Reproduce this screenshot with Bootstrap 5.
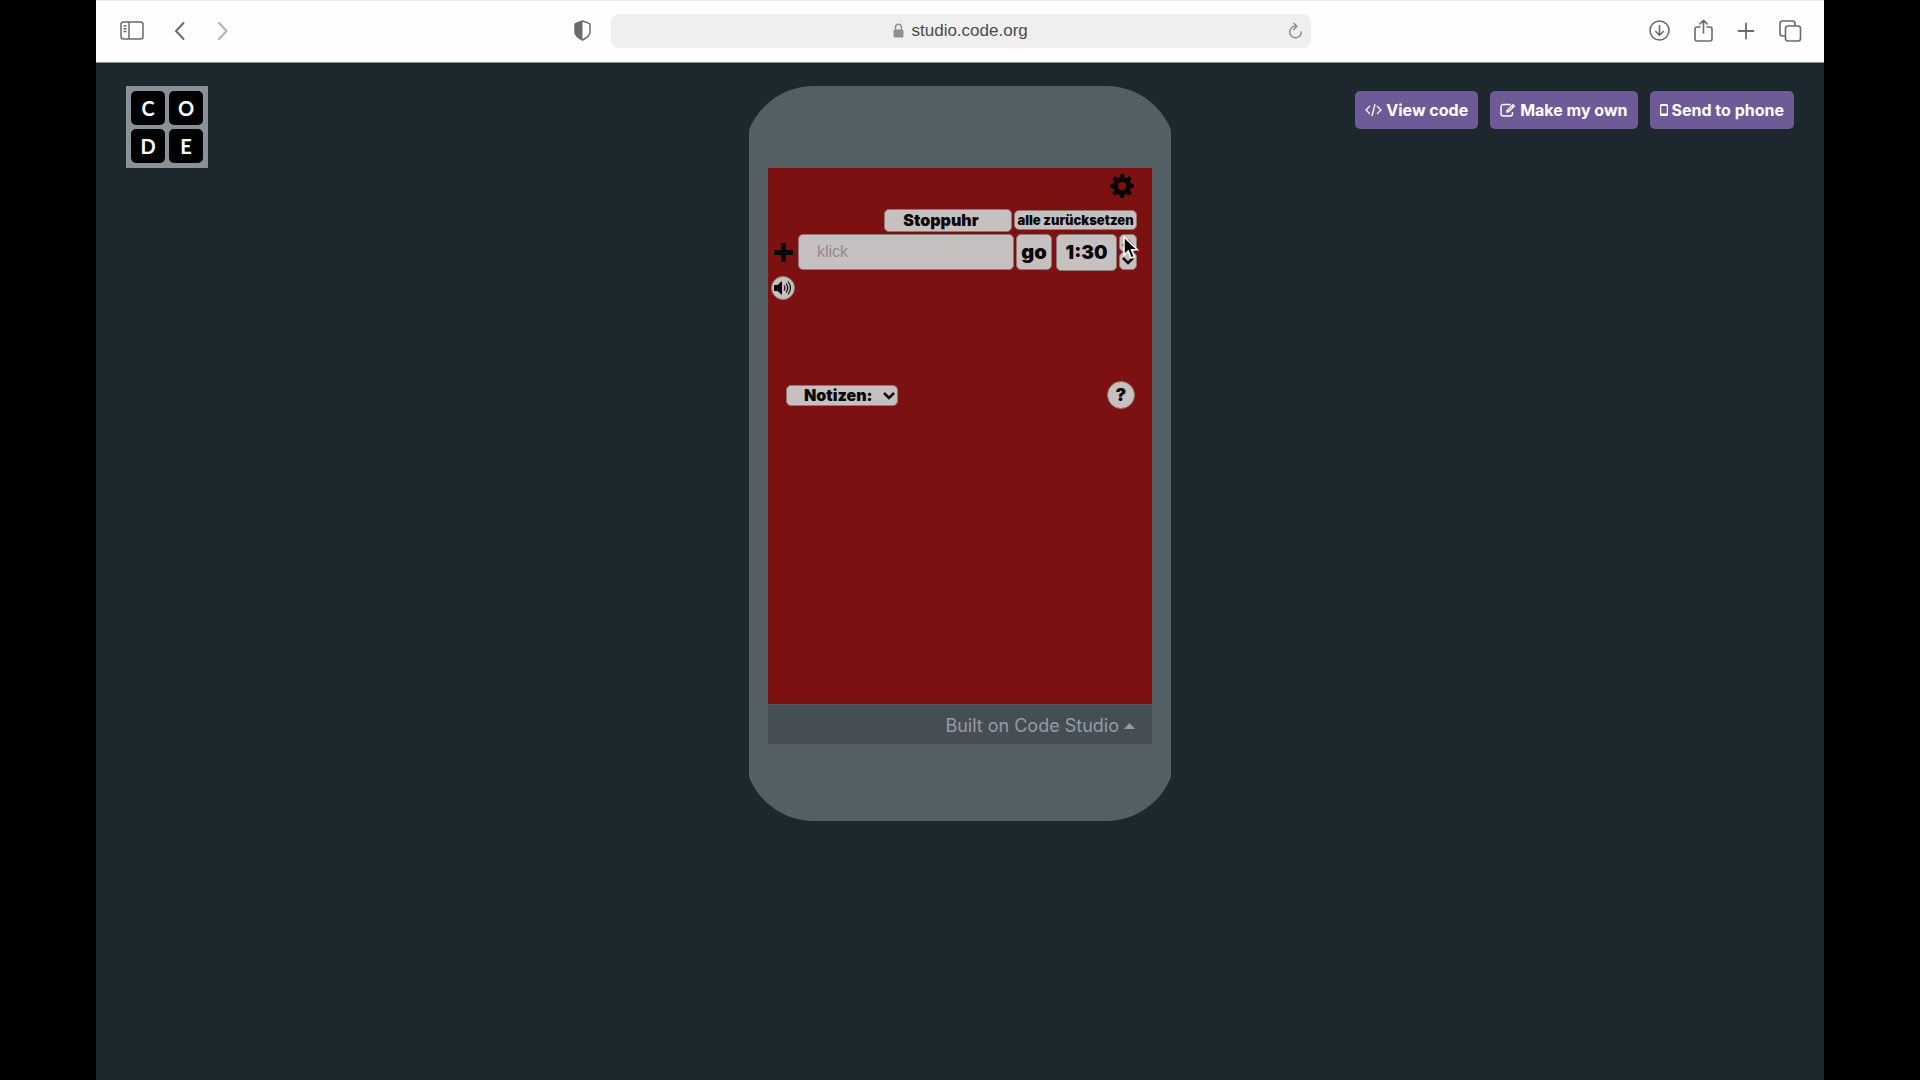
<!DOCTYPE html>
<html lang="de">
<head>
<meta charset="utf-8">
<meta name="viewport" content="width=device-width, initial-scale=1">
<title>studio.code.org</title>
<link href="https://cdn.jsdelivr.net/npm/bootstrap@5.3.0/dist/css/bootstrap.min.css" rel="stylesheet">
<style>
  body { background: #000; font-family: "Liberation Sans", Arial, sans-serif; }
  svg { display: block; flex: none; }
  button { color: inherit; }
  .browser { width: 90%; background: #1d282e; }
  .toolbar { height: 63px; background: #fefefe; border-top: 1px solid #ececec; border-bottom: 1px solid #8c9290; color: #6b6b6b; padding: 0 22px 2px 24px; }
  .tool { padding: 0; border: 0; background: none; }
  .side { flex: 1 1 0; }
  .address { flex: 0 1 700px; height: 34px; border-radius: 8px; background: #efefef; color: #8e8e8e; }
  .address input { width: 118px; padding: 0; border: 0; background: none; color: #4b4b4b; font-size: 17px; line-height: 24px; }
  .stage { padding: 23px 30px; }
  .logo { width: 82px; height: 82px; padding: 5px; gap: 4px; background: #889195; display: grid; grid-template-columns: 1fr 1fr; text-decoration: none; }
  .logo span { background: #000; color: #fff; border-radius: 5px; display: grid; place-items: center; font: 700 20px/24px Lato, sans-serif; }
  .actions { gap: 12px; padding-top: 5px; }
  .action { background: #6d5a97; color: #fff; height: 38px; padding: 0 10px; border: 0; border-radius: 5px; font: 700 16px/24px Inter, sans-serif; white-space: nowrap; }
  .phone { width: 422px; padding: 82px 19px 77px; overflow: hidden; position: relative; z-index: 0; flex: none; }
  .phone::before { content: ""; position: absolute; inset: 0 -5px; border-radius: 70px; background: #535f65; z-index: -1; }
  .screen { min-height: 536px; background: #7d1010; padding-top: 6px; color: #090505; }
  .gear-row { padding-right: 17px; }
  .key { background: #c6c0c0; color: #0b0808; border: 1px solid #8e7777; border-radius: 5px; padding: 0; font-family: Inter, sans-serif; font-weight: 900; text-align: center; }
  .bar-row { height: 22px; margin-top: 11px; padding-right: 15px; gap: 2px; }
  .timer-row { height: 36px; margin-top: 3px; padding: 0 15px 0 6px; }
  .stopwatch { width: 128px; height: 23px; padding-right: 14px; font-size: 16px; line-height: 20px; }
  .reset { width: 123px; height: 20px; font-size: 13px; line-height: 18px; white-space: nowrap; }
  .task { width: 216px; height: 36px; padding: 0 18px; font: 400 16px/24px "Liberation Sans", sans-serif; text-align: left; }
  .task::placeholder { color: #928d8d; opacity: 1; }
  .go { width: 36px; height: 36px; font-size: 20px; line-height: 24px; margin-left: 2px; }
  .time { width: 61px; height: 37px; font-size: 19px; line-height: 24px; margin-left: 4px; }
  .spin { width: 18px; height: 36px; margin-left: 2px; }
  .spin button { flex: 1; display: grid; place-items: center; }
  .sound, .help { border-radius: 50%; display: grid; place-items: center; }
  .sound { width: 24px; height: 24px; margin: 6px 0 0 3px; }
  .notes-row { margin-top: 81px; padding: 0 17px 0 18px; }
  .notes select { appearance: none; display: block; width: 112px; height: 21px; padding-left: 17px; font-size: 16px; line-height: 18px; text-align: left; }
  .notes svg { position: absolute; right: 3px; top: 7px; pointer-events: none; }
  .help { width: 28px; height: 28px; font-size: 18px; line-height: 24px; }
  .studio-bar { height: 40px; background: #464e55; border-top: 1px solid #55565b; padding: 3px 17px 0 0; }
  .studio-bar a { color: #959ca1; text-decoration: none; font: 400 18px/24px Inter, sans-serif; gap: 5px; }
  .pointer { position: absolute; left: 374px; top: 150px; pointer-events: none; }
</style>
<script src="https://cdn.jsdelivr.net/npm/bootstrap@5.3.0/dist/js/bootstrap.bundle.min.js"></script>
</head>
<body>
<div class="browser mx-auto min-vh-100">
  <header class="toolbar d-flex align-items-center">
    <div class="side d-flex align-items-center">
      <button class="tool" aria-label="Sidebar"><svg width="25" height="20" viewBox="0 0 25 20" fill="none" stroke="currentColor" stroke-width="1.5"><rect x="1" y="1" width="22" height="17" rx="2.5"/><path d="M9 1v17M3.5 5h3M3.5 7.800h3M3.500 10.500h3" /></svg></button>
      <button class="tool ms-4 ps-1" aria-label="Back"><svg width="14" height="20" viewBox="0 0 14 20" fill="none" stroke="currentColor" stroke-width="2" stroke-linecap="round" stroke-linejoin="round"><path d="M10.500 2 3 10l7.500 8"/></svg></button>
      <button class="tool ms-4 ps-1 opacity-50" aria-label="Forward"><svg width="14" height="20" viewBox="0 0 14 20" fill="none" stroke="currentColor" stroke-width="2" stroke-linecap="round" stroke-linejoin="round"><path d="m4 2 7.500 8L4 18"/></svg></button>
      <button class="tool ms-auto me-3 pe-1" aria-label="Privacy"><svg width="17" height="21" viewBox="0 0 17 21"><path d="M8.500 1 15 3.400Q16 4 16 5v7c0 4-4.500 6.500-7.500 8C5.500 18.500 1 16 1 12V5q0-1 1-1.600z" fill="none" stroke="currentColor" stroke-width="1.500"/><path d="M8.500 1 2 3.400Q1 4 1 5v7c0 4 4.500 6.500 7.500 8z" fill="currentColor"/></svg></button>
    </div>
    <div class="address d-flex align-items-center justify-content-center position-relative">
      <svg class="me-2" width="11" height="15" viewBox="0 0 11 15"><rect x="0.500" y="6.500" width="10" height="8" rx="1.500" fill="currentColor"/><path d="M2.500 7V4.200a3 3 0 0 1 6 0V7" fill="none" stroke="currentColor" stroke-width="1.400"/></svg>
      <input type="text" value="studio.code.org" aria-label="Adresse">
      <button class="tool position-absolute end-0 me-2" aria-label="Reload"><svg width="15" height="18" viewBox="0 0 15 18" fill="none" stroke="currentColor" stroke-width="1.500" stroke-linecap="round" stroke-linejoin="round"><path d="M8.500 4.200A5.800 5.800 0 1 0 13.300 10M5.800 1.300l3.200 3-3.200 3.100"/></svg></button>
    </div>
    <div class="side d-flex align-items-center justify-content-end gap-4">
      <button class="tool" aria-label="Downloads"><svg width="21" height="21" viewBox="0 0 21 21" fill="none" stroke="currentColor" stroke-width="1.600" stroke-linecap="round" stroke-linejoin="round"><circle cx="10.500" cy="10.500" r="9.500"/><path d="M10.500 5.500v9.500M6.800 11.500l3.700 3.700 3.700-3.700"/></svg></button>
      <button class="tool" aria-label="Share"><svg width="19" height="24" viewBox="0 0 19 24" fill="none" stroke="currentColor" stroke-width="1.600" stroke-linecap="round" stroke-linejoin="round"><path d="M6 8H3Q1 8 1 10v10q0 2 2 2h13q2 0 2-2V10q0-2-2-2h-3M9.500 14V1.500M5.800 5l3.700-3.700L13.200 5"/></svg></button>
      <button class="tool" aria-label="New tab"><svg width="18" height="18" viewBox="0 0 18 18" fill="none" stroke="currentColor" stroke-width="1.800" stroke-linecap="round"><path d="M9 1.500v15M1.500 9h15"/></svg></button>
      <button class="tool" aria-label="Tabs"><svg width="23" height="22" viewBox="0 0 23 22" fill="none" stroke="currentColor" stroke-width="1.600"><path d="M6 16H3.500Q1 16 1 13.500v-10Q1 1 3.500 1h10Q16 1 16 3.500V6"/><rect x="6.500" y="6" width="15" height="15" rx="2.500"/></svg></button>
    </div>
  </header>

  <main class="stage d-flex align-items-start">
    <div class="side"><a class="logo" href="#" aria-label="Code.org"><span>C</span><span>O</span><span>D</span><span>E</span></a></div>

    <div class="phone">
      <section class="screen">
        <div class="gear-row d-flex justify-content-end">
          <button class="tool" aria-label="Einstellungen"><svg width="26" height="24" viewBox="-13 -12 26 24"><g fill="currentColor"><circle r="9"/><path d="M-2.800-8-1.800-12h3.600l1 4v16l-1 4h-3.600l-1-4z"/><path d="M-2.800-8-1.800-12h3.600l1 4v16l-1 4h-3.600l-1-4z" transform="rotate(45)"/><path d="M-2.800-8-1.800-12h3.600l1 4v16l-1 4h-3.600l-1-4z" transform="rotate(90)"/><path d="M-2.800-8-1.800-12h3.600l1 4v16l-1 4h-3.600l-1-4z" transform="rotate(135)"/></g><circle r="4" fill="#7d1010"/></svg></button>
        </div>
        <div class="bar-row d-flex justify-content-end align-items-center">
          <button class="key stopwatch">Stoppuhr</button>
          <button class="key reset">alle zurücksetzen</button>
        </div>
        <div class="timer-row d-flex align-items-center">
          <button class="tool me-auto" aria-label="Hinzufügen"><svg width="19" height="19" viewBox="0 0 19 19" fill="none" stroke="currentColor" stroke-width="5"><path d="M9.500 0v19M0 9.500h19"/></svg></button>
          <input class="key task" type="text" placeholder="klick" aria-label="Aufgabe">
          <button class="key go">go</button>
          <input class="key time" type="text" value="1:30" aria-label="Zeit">
          <div class="spin d-flex flex-column">
            <button class="key" aria-label="Mehr"><svg width="12" height="8" viewBox="0 0 12 8" fill="none" stroke="currentColor" stroke-width="2.500"><path d="m1 7 5-5 5 5"/></svg></button>
            <button class="key" aria-label="Weniger"><svg width="12" height="8" viewBox="0 0 12 8" fill="none" stroke="currentColor" stroke-width="2.500"><path d="m1 1 5 5 5-5"/></svg></button>
          </div>
        </div>
        <button class="key sound" aria-label="Ton"><svg width="20" height="16" viewBox="0 0 20 16"><path d="M1 5h3.500L9 1v14l-4.500-4H1z" fill="currentColor"/><path d="M11 5.500q2 2.500 0 5M13 3.500q3.500 4.500 0 9M15 1.500q5 6.500 0 13" fill="none" stroke="currentColor" stroke-width="1.200"/></svg></button>
        <div class="notes-row d-flex justify-content-between align-items-center">
          <div class="notes position-relative">
            <select class="key" aria-label="Notizen"><option>Notizen:</option></select>
            <svg width="12" height="8" viewBox="0 0 12 8" fill="none" stroke="currentColor" stroke-width="2.500"><path d="m1 1 5 5 5-5"/></svg>
          </div>
          <button class="key help">?</button>
        </div>
      </section>
      <footer class="studio-bar d-flex align-items-center justify-content-end">
        <a class="d-flex align-items-center" href="#">Built on Code Studio <svg width="11" height="6" viewBox="0 0 11 6"><path d="M0 6 5.500 0 11 6z" fill="currentColor"/></svg></a>
      </footer>
      <svg class="pointer" width="17" height="24" viewBox="0 0 17 24"><path d="M1 1v18l4.200-4 2.900 7 3.300-1.400-2.900-6.800h6z" fill="#080808" stroke="#fff" stroke-width="1.500"/></svg>
    </div>

    <nav class="side actions d-flex justify-content-end" aria-label="Projekt">
      <button class="action d-flex align-items-center gap-1"><svg width="17" height="12" viewBox="0 0 17 12" fill="none" stroke="currentColor" stroke-width="1.300"><path d="M5 2 1 6l4 4M12 2l4 4-4 4M10 0 7 12"/></svg>View code</button>
      <button class="action d-flex align-items-center gap-1"><svg width="16" height="14" viewBox="0 0 16 14" fill="none" stroke="currentColor"><path d="M10.500 1.500h-7Q1 1.500 1 4v6.500Q1 13 3.500 13H10q2.500 0 2.500-2.500V9" stroke-width="1.400"/><path d="m6 9.800.5-2.800L13 .8l2.300 2.300L8.800 9.500z" fill="currentColor" stroke="none"/><path d="m8 7.500 4.500-4.300" stroke="#6d5a97" stroke-width=".8"/></svg>Make my own</button>
      <button class="action d-flex align-items-center gap-1"><svg width="8" height="12" viewBox="0 0 8 12"><path fill-rule="evenodd" d="M1.500 0h5Q8 0 8 1.500v9Q8 12 6.500 12h-5Q0 12 0 10.500v-9Q0 0 1.500 0zM1.200 2v7.500h5.600V2z" fill="currentColor"/></svg>Send to phone</button>
    </nav>
  </main>
</div>
</body>
</html>
